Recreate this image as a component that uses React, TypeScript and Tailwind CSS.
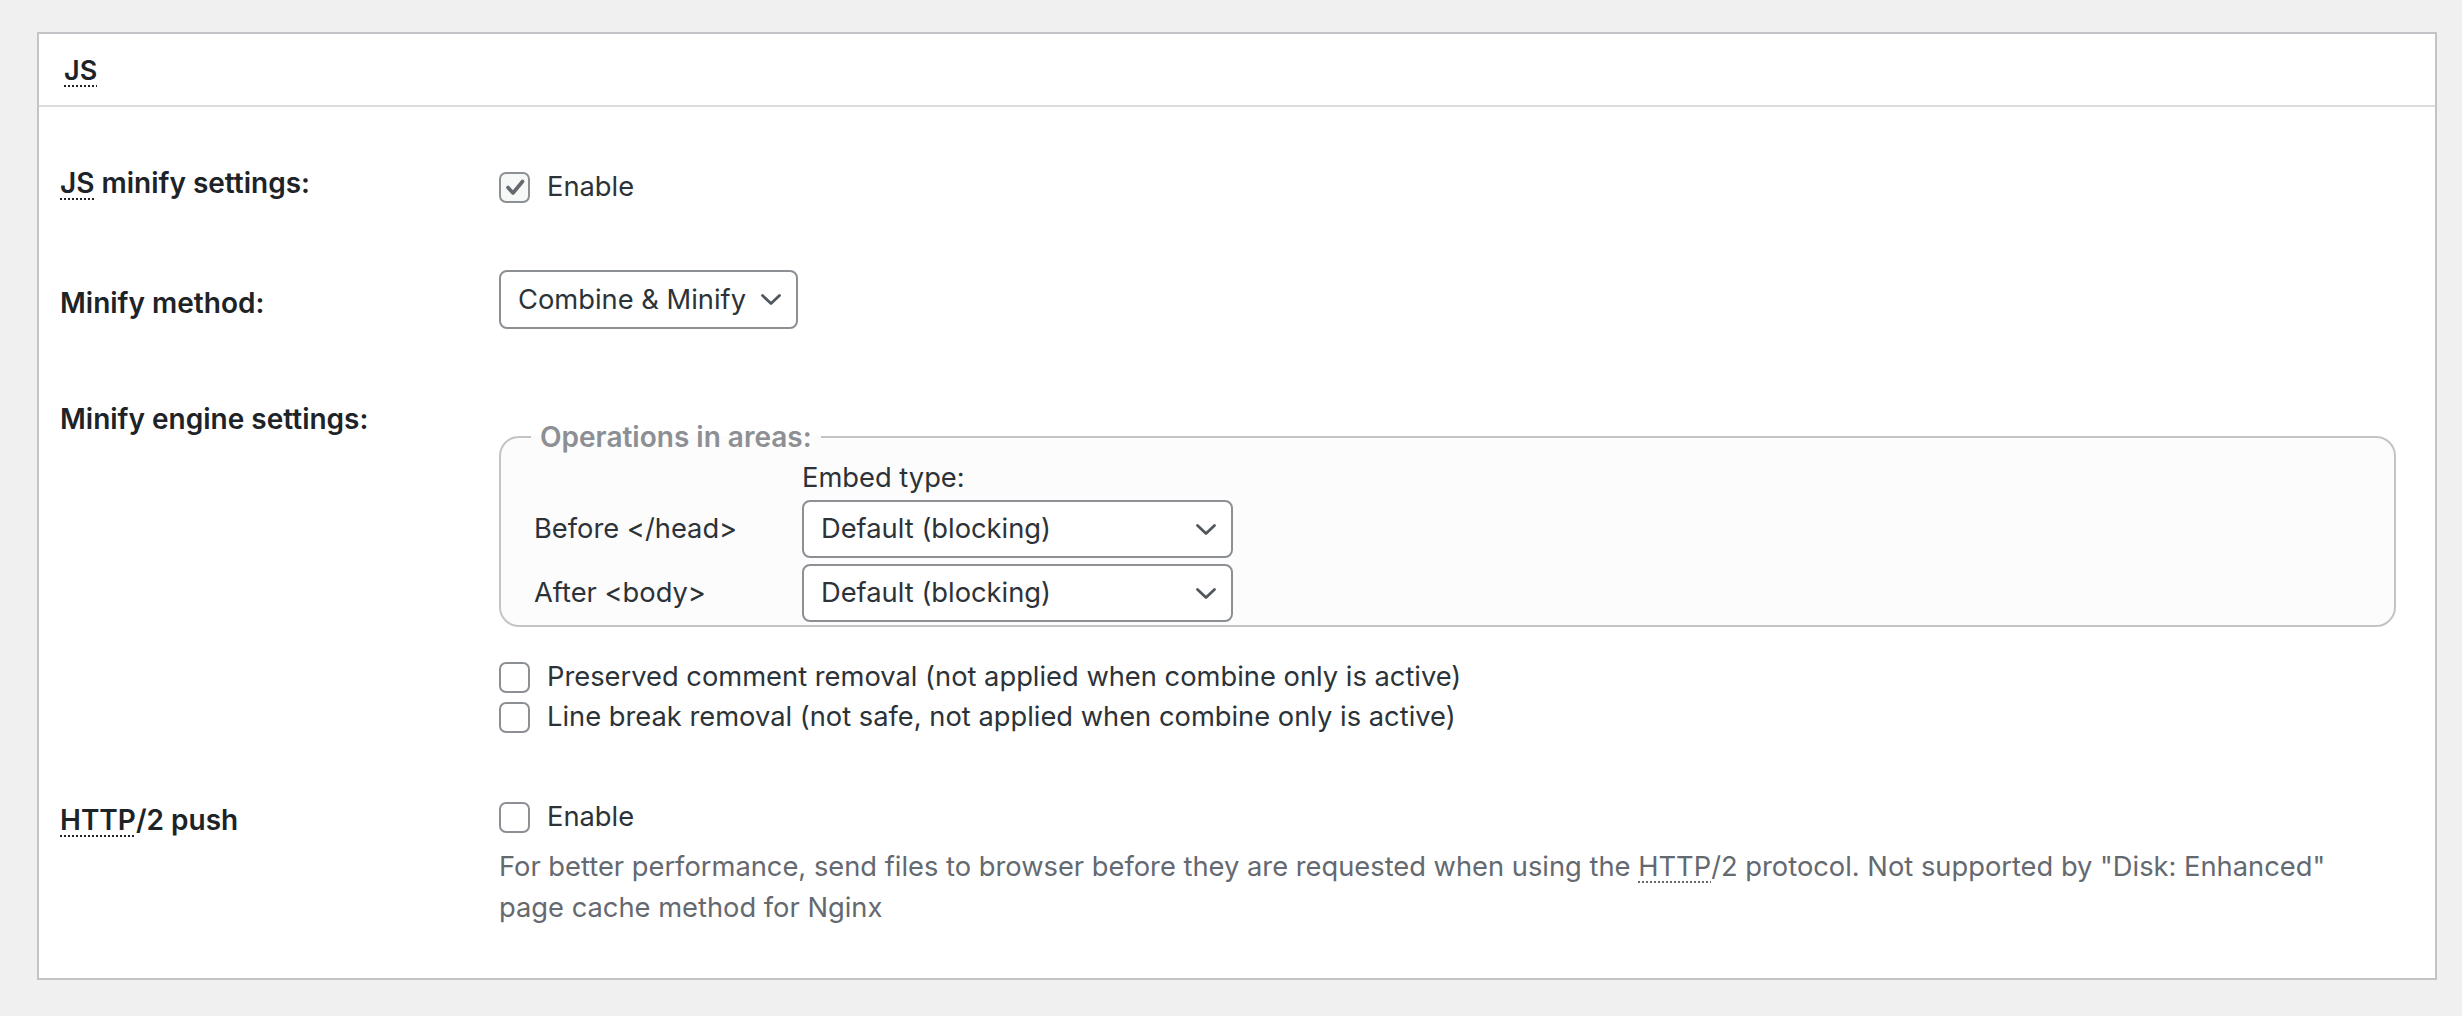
import { ReactNode } from 'react'

const font = { fontFamily: 'Inter, "Noto Sans", sans-serif' }

function Abbr({ children }: { children: ReactNode }) {
  return <abbr className="no-underline underline decoration-dotted decoration-2 underline-offset-[5px]">{children}</abbr>
}

function Checkbox({ checked = false }: { checked?: boolean }) {
  return (
    <span
      className={`flex h-[31px] w-[31px] shrink-0 items-center justify-center rounded-[7px] border-2 border-[#8c8f94] ${
        checked ? 'bg-[#f6f7f7]' : 'bg-white'
      }`}
    >
      {checked && (
        <svg width="22" height="22" viewBox="0 0 22 22" fill="none">
          <path d="M4 11.5l5 5.5L18.5 5.5" stroke="#646970" strokeWidth="3.6" strokeLinecap="round" strokeLinejoin="round" />
        </svg>
      )}
    </span>
  )
}

function Chevron() {
  return (
    <svg width="22" height="13" viewBox="0 0 22 13" fill="none">
      <path d="M2.5 2.5L11 10.5L19.5 2.5" stroke="#50575e" strokeWidth="2.8" strokeLinecap="round" strokeLinejoin="round" />
    </svg>
  )
}

function Select({ value, className }: { value: string; className: string }) {
  return (
    <div
      className={`flex items-center justify-between rounded-[8px] border-2 border-[#8c8f94] bg-white text-[#2c3338] ${className}`}
    >
      <span>{value}</span>
      <Chevron />
    </div>
  )
}

function CheckRow({ label, checked, className = '' }: { label: ReactNode; checked?: boolean; className?: string }) {
  return (
    <div className={`flex items-center gap-[17px] text-[#2c3338] ${className}`}>
      <Checkbox checked={checked} />
      <span>{label}</span>
    </div>
  )
}

export default function App() {
  return (
    <div className="min-h-screen bg-[#f0f0f1] pt-[32px] text-[27.3px] leading-[34px]" style={font}>
      <div className="ml-[37px] w-[2400px] border-2 border-[#c3c4c7] bg-white">
        {/* Header */}
        <div className="flex h-[73px] items-center border-b-2 border-[#dcdcde] pl-[25px] pt-[3px]">
          <h3 className="text-[27px] font-semibold text-[#1d2327]">
            <Abbr>JS</Abbr>
          </h3>
        </div>

        <div className="pb-[50px]">
          {/* JS minify settings */}
          <div className="flex pt-[53px]">
            <div className="w-[460px] shrink-0 pl-[21px] pt-[6px] text-[28px] font-semibold text-[#1d2327]">
              <Abbr>JS</Abbr> minify settings:
            </div>
            <div className="flex-1 pt-[10px]">
              <CheckRow label="Enable" checked className="h-[34px]" />
            </div>
          </div>

          {/* Minify method */}
          <div className="mt-[66px] flex">
            <div className="w-[460px] shrink-0 pl-[21px] pt-[16px] text-[28px] font-semibold text-[#1d2327]">
              Minify method:
            </div>
            <div className="flex-1">
              <Select value="Combine & Minify" className="h-[59px] w-[299px] pl-[17px] pr-[14px]" />
            </div>
          </div>

          {/* Minify engine settings */}
          <div className="mt-[72px] flex">
            <div className="w-[460px] shrink-0 pl-[21px] pt-[1px] text-[28px] font-semibold text-[#1d2327]">
              Minify engine settings:
            </div>
            <div className="flex-1 pr-[39px] pt-[19px]">
              <fieldset className="rounded-[20px] border-2 border-[#c3c4c7] bg-[#fcfcfc] pb-[3px] pl-[30px]">
                <legend className="px-[9px] text-[28px] font-semibold text-[#8c8f94]">Operations in areas:</legend>
                <div className="grid grid-cols-[271px_431px] text-[#2c3338]">
                  <div className="h-[46px]" />
                  <div className="h-[46px] pt-[7px]">Embed type:</div>
                  <div className="flex h-[58px] items-center pl-[3px]">Before &lt;/head&gt;</div>
                  <Select value="Default (blocking)" className="h-[58px] pl-[17px] pr-[14px]" />
                  <div className="mt-[6px] flex h-[58px] items-center pl-[3px]">After &lt;body&gt;</div>
                  <Select value="Default (blocking)" className="mt-[6px] h-[58px] pl-[17px] pr-[14px]" />
                </div>
              </fieldset>
              <div className="mt-[30px]">
                <CheckRow label="Preserved comment removal (not applied when combine only is active)" className="h-[40px]" />
                <CheckRow label="Line break removal (not safe, not applied when combine only is active)" className="h-[40px]" />
              </div>
            </div>
          </div>

          {/* HTTP/2 push */}
          <div className="mt-[63px] flex">
            <div className="w-[460px] shrink-0 pl-[21px] pt-[3px] text-[28px] font-semibold text-[#1d2327]">
              <Abbr>HTTP</Abbr>/2 push
            </div>
            <div className="flex-1 pr-[100px]">
              <CheckRow label="Enable" className="h-[34px]" />
              <p className="mt-[12px] leading-[41px] text-[#646970]">
                For better performance, send files to browser before they are requested when using the <Abbr>HTTP</Abbr>/2
                protocol. Not supported by "Disk: Enhanced" page cache method for Nginx
              </p>
            </div>
          </div>
        </div>
      </div>
    </div>
  )
}
